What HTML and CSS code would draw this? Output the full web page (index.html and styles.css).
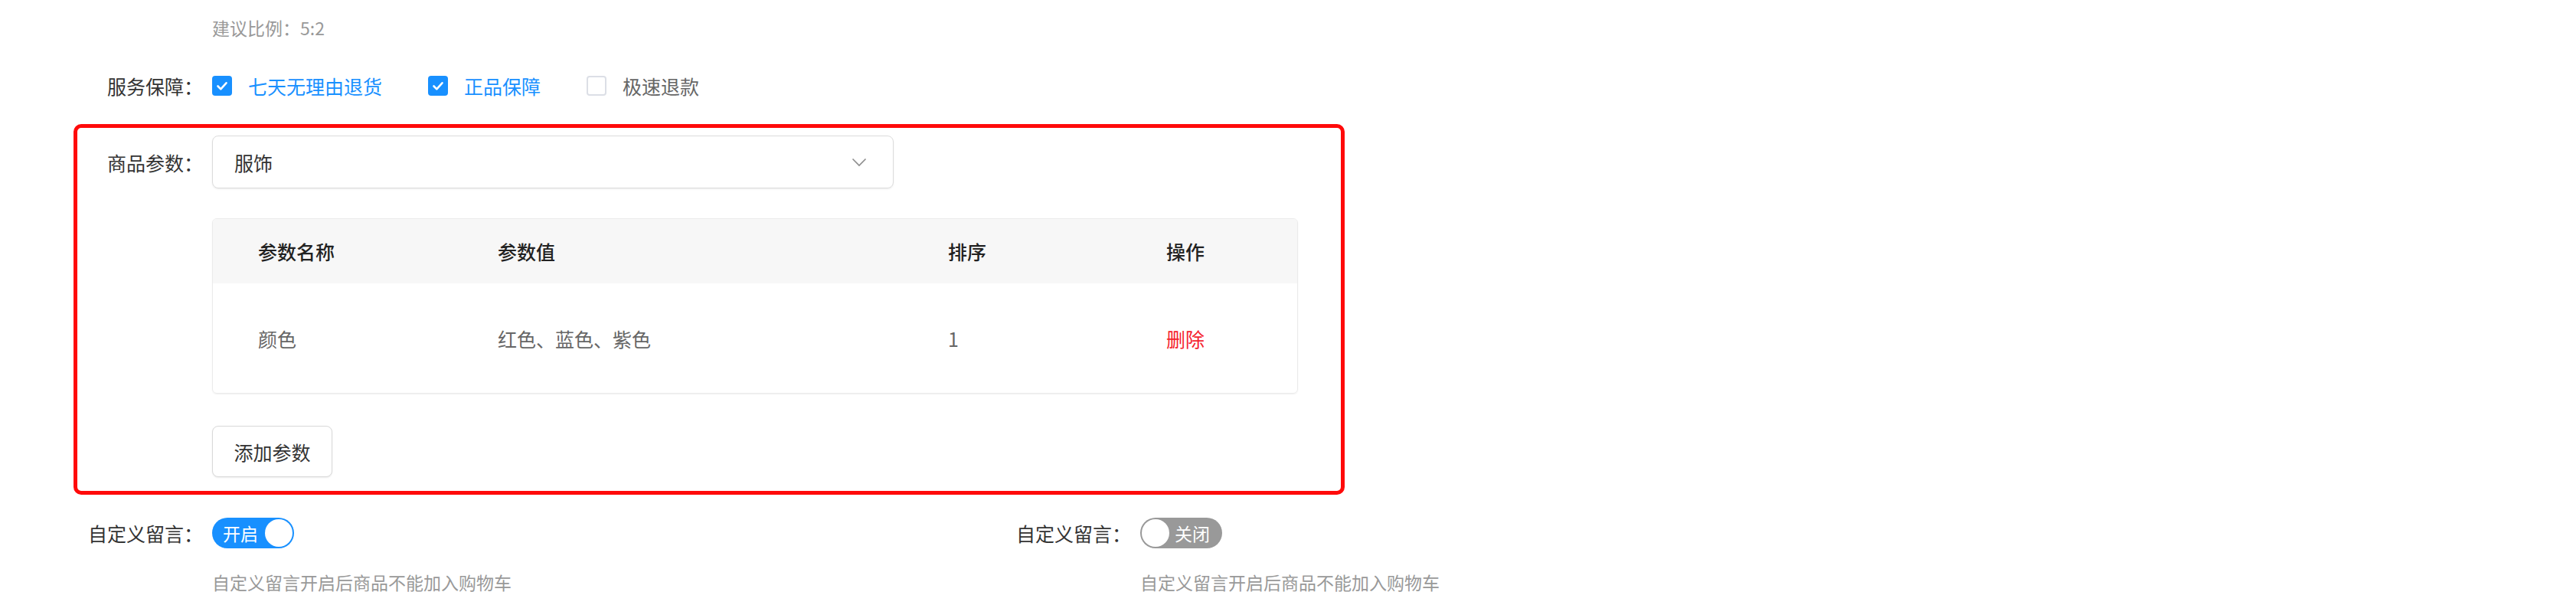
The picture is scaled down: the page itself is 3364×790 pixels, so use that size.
FILE: index.html
```html
<!DOCTYPE html>
<html lang="zh-CN">
<head>
    <meta charset="UTF-8">
    <title>商品编辑</title>
    <link rel="stylesheet" href="styles.css">
</head>
<body>
    <div class="goods-form">
        <!-- image ratio tip -->
        <p class="tip first-tip">建议比例：5:2</p>

        <!-- service guarantee -->
        <div class="form-item service-row">
            <label class="item-label">服务保障：</label>
            <div class="checks">
                <label class="check checked">
                    <span class="box"><svg viewBox="0 0 26 26" width="26" height="26"><path d="M7.5 13.5l3.8 3.8 7.2-8" fill="none" stroke="#fff" stroke-width="2.6" stroke-linecap="round" stroke-linejoin="round"/></svg></span>
                    七天无理由退货
                </label>
                <label class="check checked">
                    <span class="box"><svg viewBox="0 0 26 26" width="26" height="26"><path d="M7.5 13.5l3.8 3.8 7.2-8" fill="none" stroke="#fff" stroke-width="2.6" stroke-linecap="round" stroke-linejoin="round"/></svg></span>
                    正品保障
                </label>
                <label class="check">
                    <span class="box"></span>
                    极速退款
                </label>
            </div>
        </div>

        <!-- goods params (highlighted block) -->
        <div class="highlight">
            <div class="form-item">
                <label class="item-label">商品参数：</label>
                <div class="select">
                    <span>服饰</span>
                    <svg class="arrow" viewBox="0 0 20 12" width="20" height="12"><path d="M1.5 1.5l8.5 8.5 8.5-8.5" fill="none" stroke="#8c8c8c" stroke-width="1.6"/></svg>
                </div>
            </div>
            <div class="param-block">
                <div class="param-table">
                    <div class="tr thead">
                        <div class="td">参数名称</div>
                        <div class="td">参数值</div>
                        <div class="td">排序</div>
                        <div class="td">操作</div>
                    </div>
                    <div class="tr">
                        <div class="td">颜色</div>
                        <div class="td">红色、蓝色、紫色</div>
                        <div class="td">1</div>
                        <div class="td"><a class="del">删除</a></div>
                    </div>
                </div>
                <button class="btn">添加参数</button>
            </div>
        </div>

        <!-- custom message switches -->
        <div class="two-col">
            <div class="col">
                <div class="form-item">
                    <label class="item-label">自定义留言：</label>
                    <span class="switch on"><span class="switch-text">开启</span><span class="knob"></span></span>
                </div>
                <p class="tip field-tip">自定义留言开启后商品不能加入购物车</p>
            </div>
            <div class="col">
                <div class="form-item">
                    <label class="item-label">自定义留言：</label>
                    <span class="switch off"><span class="knob"></span><span class="switch-text">关闭</span></span>
                </div>
                <p class="tip field-tip">自定义留言开启后商品不能加入购物车</p>
            </div>
        </div>
    </div>
</body>
</html>
```

FILE: styles.css
```css
/* goods form */
body {
    margin: 0;
    background: #fff;
    font-family: "Noto Sans CJK SC", "Noto Sans", sans-serif;
    color: #333;
}

.goods-form {
    width: 2424px;
}

.tip {
    margin: 0;
    font-size: 23px;
    line-height: 32px;
    color: #999;
}

.first-tip {
    padding: 20px 0 0 277px;
}

.form-item {
    display: flex;
    align-items: center;
}

.item-label {
    flex: none;
    width: 277px;
    box-sizing: border-box;
    padding-right: 12px;
    text-align: right;
    font-size: 25px;
    line-height: 40px;
    color: #333;
}

.service-row {
    margin-top: 40px;
    height: 40px;
}

.checks {
    display: flex;
    gap: 60px;
}

.check {
    display: flex;
    align-items: center;
    gap: 21px;
    font-size: 25px;
    color: #666;
}

.check.checked {
    color: #1890ff;
}

.box {
    width: 26px;
    height: 26px;
    box-sizing: border-box;
    border: 2px solid #dcdfe6;
    border-radius: 4px;
    display: flex;
}

.check.checked .box {
    border: none;
    background: #1890ff;
}

/* highlighted params block */
.highlight {
    margin: 30px 0 0 96px;
    width: 1660px;
    box-sizing: border-box;
    border: 5px solid #ff0a0a;
    border-radius: 10px;
    padding: 10px 0 18px;
}

.highlight .item-label {
    width: 176px;
}

.select {
    width: 890px;
    height: 69px;
    box-sizing: border-box;
    border: 1px solid #dcdcdc;
    border-radius: 8px;
    box-shadow: 0 1px 2px rgba(0,0,0,0.08);
    padding: 0 34px 0 28px;
    display: flex;
    align-items: center;
    justify-content: space-between;
    font-size: 25px;
    color: #333;
}

.param-block {
    padding-left: 176px;
}

.param-table {
    margin-top: 39px;
    width: 1416px;
    border: 1px solid #ebebeb;
    border-radius: 6px;
    box-shadow: 0 1px 2px rgba(0,0,0,0.06);
    overflow: hidden;
}

.tr {
    display: grid;
    grid-template-columns: 313px 588px 285px 1fr;
    height: 143px;
    align-items: center;
    font-size: 25px;
    color: #666;
}

.tr.thead {
    height: 84px;
    background: #f7f7f7;
    color: #222;
    font-weight: 500;
}

.td {
    padding-left: 59px;
}

.del {
    color: #f5222d;
}

.btn {
    display: block;
    margin-top: 42px;
    width: 157px;
    height: 67px;
    background: #fff;
    border: 1px solid #d9d9d9;
    border-radius: 8px;
    box-shadow: 0 1px 2px rgba(0,0,0,0.08);
    font-family: inherit;
    font-size: 25px;
    color: #333;
}

/* switches */
.two-col {
    display: flex;
    margin-top: 30px;
}

.col {
    width: 1212px;
}

.col .form-item {
    height: 40px;
}

.switch {
    width: 107px;
    height: 40px;
    box-sizing: border-box;
    border-radius: 20px;
    padding: 2px;
    display: flex;
    align-items: center;
    justify-content: space-between;
    color: #fff;
    font-size: 23px;
}

.switch.on {
    background: #1890ff;
}

.switch.off {
    background: #999;
}

.switch.on .switch-text {
    padding-left: 12px;
}

.switch.off .switch-text {
    padding-right: 14px;
}

.knob {
    width: 36px;
    height: 36px;
    border-radius: 50%;
    background: #fff;
}

.field-tip {
    margin-top: 28px;
    padding-left: 277px;
}
```
